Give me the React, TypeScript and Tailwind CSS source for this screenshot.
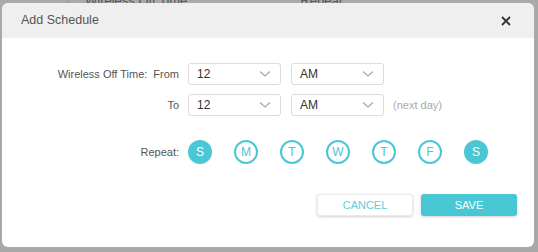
import React from "react";

const Chevron = () => (
  <svg width="12" height="8" viewBox="0 0 12 8" className="text-[#a8a8a8]">
    <polyline points="1,1.5 6,6 11,1.5" fill="none" stroke="currentColor" strokeWidth="1.2" />
  </svg>
);

const Select: React.FC<{ value: string }> = ({ value }) => (
  <div className="w-[93px] h-[22px] border border-[#dcdcdc] rounded-[3px] bg-white flex items-center justify-between pl-[8px] pr-[9px] text-[12px] text-[#333]">
    <span>{value}</span>
    <Chevron />
  </div>
);

const days = [
  { d: "S", on: true },
  { d: "M", on: false },
  { d: "T", on: false },
  { d: "W", on: false },
  { d: "T", on: false },
  { d: "F", on: false },
  { d: "S", on: true },
];

export default function App() {
  return (
    <div
      className="relative w-[538px] h-[252px] overflow-hidden bg-[#a9a9a9] pt-[3px] pl-[2px]"
      style={{ fontFamily: '"Liberation Sans", Arial, sans-serif' }}
    >
      {/* page behind the dialog */}
      <div className="absolute top-[-9px] left-0 w-full flex text-[13px] text-[#555] pointer-events-none">
        <span className="ml-[85px]">Wireless Off Time</span>
        <span className="ml-[113px]">Repeat</span>
      </div>
      <div className="absolute top-0 left-[68px] w-px h-[3px] bg-[#999]" />

      <div className="relative w-[532px] h-[244px] bg-white rounded-[6px] flex flex-col">
        <div className="h-[35px] bg-[#efefef] rounded-t-[6px] flex items-center justify-between pl-[19px] pr-[23px]">
          <span className="text-[12.5px] text-[#555]">Add Schedule</span>
          <svg width="10" height="10" viewBox="0 0 10 10">
            <path d="M1 1 L9 9 M9 1 L1 9" stroke="#333" strokeWidth="1.8" />
          </svg>
        </div>

        <div className="flex flex-col pt-[25px] text-[11px] text-[#555]">
          <div className="flex items-center h-[22px]">
            <div className="w-[178px] text-right pr-[1px]">
              Wireless Off Time:<span className="ml-[6px]">From</span>
            </div>
            <div className="ml-[8px] flex gap-[10px]">
              <Select value="12" />
              <Select value="AM" />
            </div>
          </div>

          <div className="flex items-center h-[22px] mt-[9px]">
            <div className="w-[178px] text-right pr-[1px]">To</div>
            <div className="ml-[8px] flex gap-[10px] items-center">
              <Select value="12" />
              <Select value="AM" />
              <span className="ml-[-1px] text-[#aaa]">(next day)</span>
            </div>
          </div>

          <div className="flex items-center h-[24px] mt-[24px]">
            <div className="w-[178px] text-right pr-[1px]">Repeat:</div>
            <div className="ml-[8px] flex gap-[22px]">
              {days.map((x, i) => (
                <div
                  key={i}
                  className={
                    x.on
                      ? "w-[24px] h-[24px] rounded-full bg-[#4ac7d4] text-white flex items-center justify-center text-[12px]"
                      : "w-[24px] h-[24px] rounded-full border-2 border-[#4ac7d4] text-[#4ac7d4] flex items-center justify-center text-[12px]"
                  }
                >
                  {x.d}
                </div>
              ))}
            </div>
          </div>

          <div className="flex justify-end gap-[8px] pr-[17px] mt-[30px]">
            <button className="w-[96px] h-[22px] rounded-[3px] bg-white border border-[#eaeaea] shadow-[0_1px_3px_rgba(0,0,0,0.18)] text-[11px] text-[#62cbd8]">
              CANCEL
            </button>
            <button className="w-[96px] h-[22px] rounded-[3px] bg-[#4ac7d4] shadow-[0_1px_3px_rgba(0,0,0,0.18)] text-[11px] text-white">
              SAVE
            </button>
          </div>
        </div>
      </div>
    </div>
  );
}
